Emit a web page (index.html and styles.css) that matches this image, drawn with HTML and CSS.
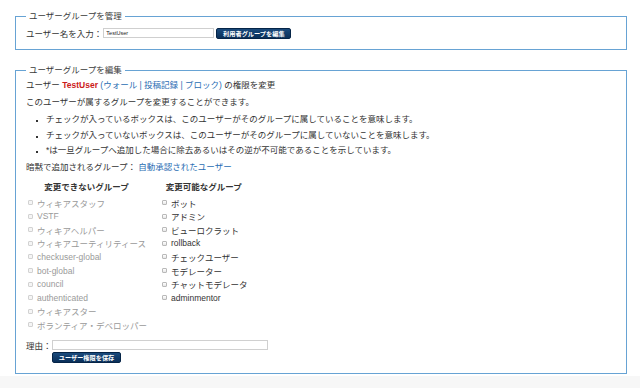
FILE: index.html
```html
<!DOCTYPE html>
<html lang="ja">
<head>
<meta charset="utf-8">
<link rel="stylesheet" href="styles.css">
</head>
<body>
<fieldset class="box box-first">
  <legend>ユーザーグループを管理</legend>
  <div class="name-row">
    <label class="name-label">ユーザー名を入力：</label>
    <input class="name-input" type="text" value="TestUser">
    <button class="btn btn-edit">利用者グループを編集</button>
  </div>
</fieldset>

<fieldset class="box box-second">
  <legend>ユーザーグループを編集</legend>
  <p class="line line-first">ユーザー <b class="user">TestUser</b> <span class="link">(ウォール | 投稿記録 | ブロック)</span> の権限を変更</p>
  <p class="line line-second">このユーザーが属するグループを変更することができます。</p>
  <ul class="notes">
    <li>チェックが入っているボックスは、このユーザーがそのグループに属していることを意味します。</li>
    <li>チェックが入っていないボックスは、このユーザーがそのグループに属していないことを意味します。</li>
    <li>*は一旦グループへ追加した場合に除去あるいはその逆が不可能であることを示しています。</li>
  </ul>
  <p class="line line-implicit">暗黙で追加されるグループ： <span class="link">自動承認されたユーザー</span></p>

  <table class="groups">
    <thead>
      <tr><th class="col-fixed">変更できないグループ</th><th class="col-free">変更可能なグループ</th></tr>
    </thead>
    <tbody>
      <tr>
        <td class="col-fixed">
          <div class="item disabled"><span class="cb"></span>ウィキアスタッフ</div>
          <div class="item disabled"><span class="cb"></span>VSTF</div>
          <div class="item disabled"><span class="cb"></span>ウィキアヘルパー</div>
          <div class="item disabled"><span class="cb"></span>ウィキアユーティリティース</div>
          <div class="item disabled"><span class="cb"></span>checkuser-global</div>
          <div class="item disabled"><span class="cb"></span>bot-global</div>
          <div class="item disabled"><span class="cb"></span>council</div>
          <div class="item disabled"><span class="cb"></span>authenticated</div>
          <div class="item disabled"><span class="cb"></span>ウィキアスター</div>
          <div class="item disabled"><span class="cb"></span>ボランティア・デベロッパー</div>
        </td>
        <td class="col-free">
          <div class="item"><span class="cb"></span>ボット</div>
          <div class="item"><span class="cb"></span>アドミン</div>
          <div class="item"><span class="cb"></span>ビューロクラット</div>
          <div class="item"><span class="cb"></span>rollback</div>
          <div class="item"><span class="cb"></span>チェックユーザー</div>
          <div class="item"><span class="cb"></span>モデレーター</div>
          <div class="item"><span class="cb"></span>チャットモデレータ</div>
          <div class="item"><span class="cb"></span>adminmentor</div>
        </td>
      </tr>
    </tbody>
  </table>

  <div class="reason-row">
    <label class="reason-label">理由：</label>
    <input class="reason-input" type="text">
  </div>
  <div class="save-row">
    <button class="btn btn-save">ユーザー権限を保存</button>
  </div>
</fieldset>
<div class="footer"></div>
</body>
</html>
```

FILE: styles.css
```css
html, body {
  margin: 0;
  padding: 0;
  background: #ffffff;
}
body {
  font-family: "Liberation Sans", "Noto Sans CJK JP", sans-serif;
  font-size: 8.5px;
  color: #333333;
  width: 640px;
  height: 388px;
  overflow: hidden;
}
.box {
  border: 1px solid #67a3d4;
  margin: 0 13px 0 15px;
  padding: 0 10px;
  min-width: 0;
}
.box legend {
  padding: 0 3px;
  line-height: 12px;
  color: #3a3a3a;
}
.box-first {
  margin-top: 10px;
  padding-top: 5px;
  padding-bottom: 10px;
}
.name-row {
  display: flex;
  align-items: center;
  height: 12px;
}
.name-label {
  margin-right: 1px;
}
.name-input {
  box-sizing: border-box;
  width: 111px;
  height: 10px;
  border: 1px solid #cfcfcf;
  padding: 0 2px;
  margin: 0 2px 0 0;
  font-family: "Liberation Sans", sans-serif;
  font-size: 5.5px;
  color: #222;
}
.btn {
  box-sizing: border-box;
  border: 1px solid #052447;
  border-radius: 2px;
  background: linear-gradient(#1a4a7c, #0a2f59);
  color: #ffffff;
  font-family: "Liberation Sans", "Noto Sans CJK JP", sans-serif;
  font-weight: bold;
  font-size: 6.2px;
  padding: 0;
  line-height: 9px;
  height: 11px;
  cursor: pointer;
}
.btn-edit {
  width: 75px;
}
.box-second {
  margin-top: 14px;
  padding-top: 3px;
  padding-bottom: 10px;
}
.line {
  margin: 0;
  line-height: 12px;
}
.line-second {
  margin-top: 5px;
}
.user {
  color: #cc1a1a;
}
.link {
  color: #2a6db3;
}
.notes {
  margin: 5px 0 0 0;
  padding-left: 20px;
  list-style: square;
}
.notes li {
  line-height: 12px;
  margin-bottom: 3.5px;
}
.notes li::marker {
  font-size: 6px;
  color: #333;
}
.line-implicit {
  margin-top: 5px;
}
.groups {
  border-collapse: collapse;
  margin-top: 8px;
  margin-left: 0;
}
.groups th {
  font-weight: bold;
  text-align: center;
  line-height: 12px;
  padding: 0 0 3px 0;
  color: #333;
}
.groups td {
  vertical-align: top;
  padding: 0;
}
.groups .col-free {
  padding-left: 13px;
}
.item {
  display: flex;
  align-items: center;
  height: 13.55px;
  white-space: nowrap;
}
.cb {
  box-sizing: border-box;
  width: 5px;
  height: 5px;
  border: 1px solid #b9b9b9;
  border-radius: 1px;
  background: linear-gradient(#ffffff, #e6e6e6);
  margin: 0 4px 0 2px;
  flex: none;
}
.disabled {
  color: #9a9a9a;
}
.disabled .cb {
  border-color: #d2d2d2;
  background: #f5f5f5;
}
.reason-row {
  display: flex;
  align-items: center;
  height: 12px;
  margin-top: 8px;
}
.reason-label {
  width: 26px;
}
.reason-input {
  box-sizing: border-box;
  width: 216px;
  height: 10px;
  border: 1px solid #d0d0d0;
  margin: 0;
  padding: 0;
}
.save-row {
  padding-left: 26px;
  margin-top: 1px;
  height: 11px;
}
.btn-save {
  width: 69px;
}
.footer {
  margin-top: 2px;
  height: 20px;
  background: #f7f7f7;
}
```
